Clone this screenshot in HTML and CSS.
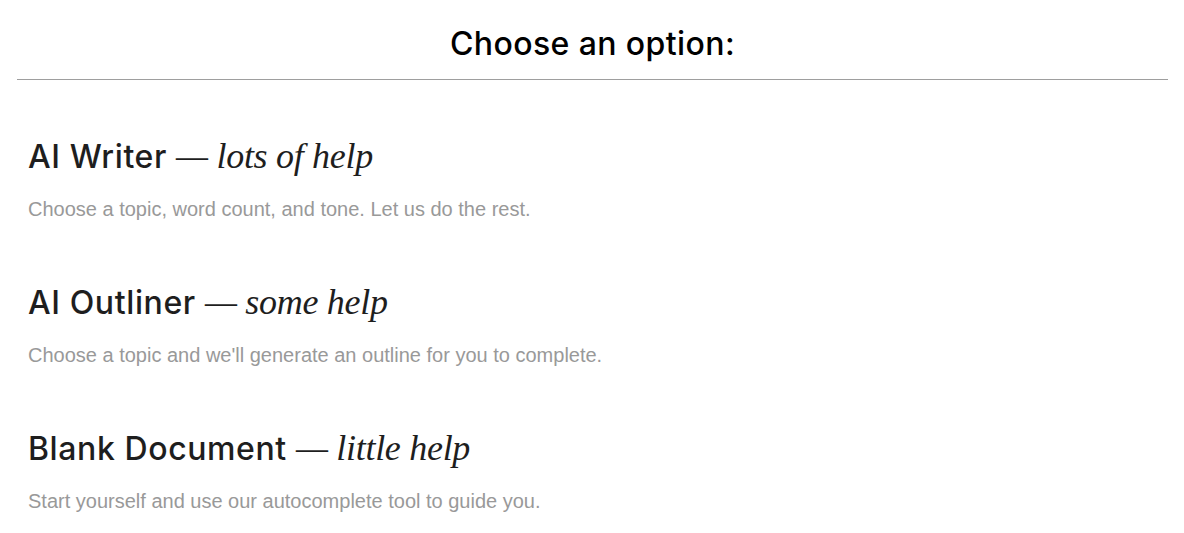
FILE: index.html
```html
<!DOCTYPE html>
<html>
<head>
<meta charset="utf-8">
<link rel="stylesheet" href="styles.css">
</head>
<body>
<div class="page">
  <header class="top">
    <h1 class="title">Choose an option:</h1>
  </header>
  <ul class="options">
    <li class="option">
      <h2 class="opt-title">AI Writer <span class="em">— lots of help</span></h2>
      <p class="opt-desc">Choose a topic, word count, and tone. Let us do the rest.</p>
    </li>
    <li class="option">
      <h2 class="opt-title">AI Outliner <span class="em">— some help</span></h2>
      <p class="opt-desc">Choose a topic and we'll generate an outline for you to complete.</p>
    </li>
    <li class="option">
      <h2 class="opt-title">Blank Document <span class="em">— little help</span></h2>
      <p class="opt-desc">Start yourself and use our autocomplete tool to guide you.</p>
    </li>
  </ul>
</div>
</body>
</html>
```
FILE: styles.css
```css
html, body {
  margin: 0;
  padding: 0;
  background: #ffffff;
  overflow: hidden;
}
.page {
  padding: 0 16px 0 17px;
  font-family: "Inter", "Liberation Sans", sans-serif;
}
.top {
  border-bottom: 1px solid #9e9e9e;
  height: 79px;
  display: flex;
  justify-content: center;
  align-items: flex-start;
}
.title {
  margin: 22px 0 0 0;
  font-size: 32px;
  font-weight: 500;
  color: #000;
  line-height: 44px;
  letter-spacing: 0.4px;
}
.options {
  list-style: none;
  margin: 0;
  padding: 0 0 0 11px;
}
.option {
  height: 146px;
}
.option:first-child {
  margin-top: 54px;
}
.opt-title {
  margin: 0;
  font-size: 32px;
  font-weight: 500;
  color: #1e1e1e;
  line-height: 44px;
  letter-spacing: 0.6px;
}
.em {
  font-family: "Liberation Serif", "DejaVu Serif", serif;
  font-style: italic;
  font-weight: 400;
  font-size: 36px;
  letter-spacing: -0.3px;
}
.opt-desc {
  margin: 18px 0 0 0;
  font-family: "Liberation Sans", Arial, sans-serif;
  font-size: 20px;
  color: #999;
  line-height: 24px;
}
```
